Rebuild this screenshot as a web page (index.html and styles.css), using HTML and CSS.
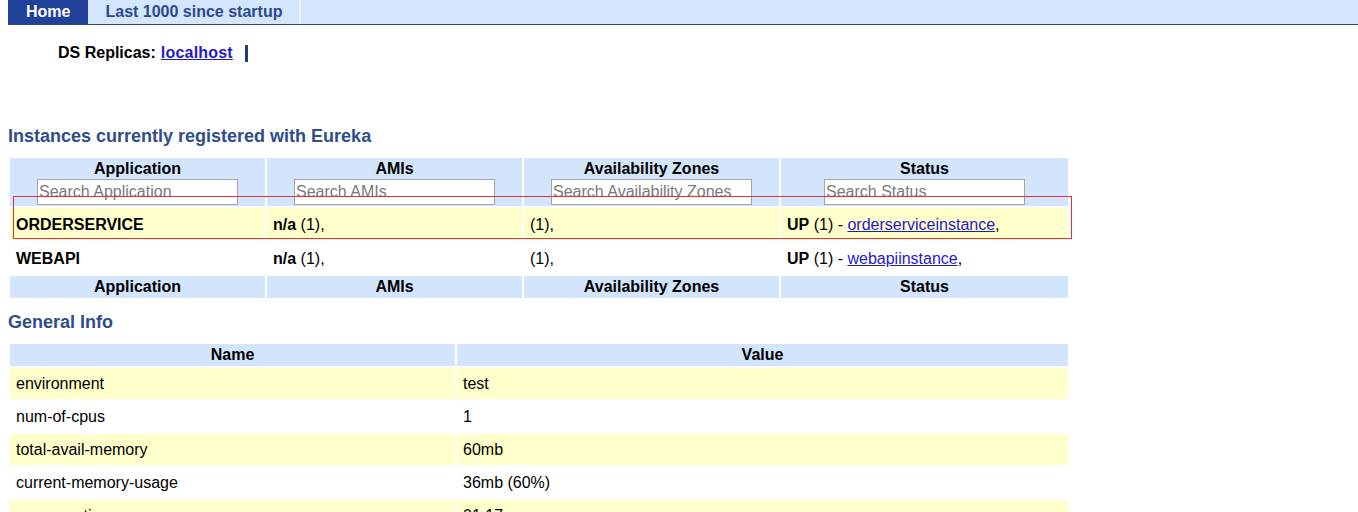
FILE: index.html
```html
<!DOCTYPE html>
<html lang="en">
<head>
<meta charset="utf-8">
<title>Eureka</title>
<link rel="stylesheet" href="styles.css">
</head>
<body>
<nav class="nav">
  <a class="tab tab-active" href="#">Home</a>
  <a class="tab" href="#">Last 1000 since startup</a>
</nav>

<div class="replicas">
  <span class="replicas-label">DS Replicas:</span>
  <a class="link" href="#">localhost</a>
  <span class="pipe"></span>
</div>

<h2 class="section-title">Instances currently registered with Eureka</h2>
<table class="grid instances">
  <colgroup>
    <col class="c-app"><col class="c-ami"><col class="c-az"><col class="c-status">
  </colgroup>
  <thead>
    <tr>
      <th class="th-search"><div class="th-label">Application</div><input class="search" placeholder="Search Application"></th>
      <th class="th-search"><div class="th-label">AMIs</div><input class="search" placeholder="Search AMIs"></th>
      <th class="th-search"><div class="th-label">Availability Zones</div><input class="search" placeholder="Search Availability Zones"></th>
      <th class="th-search"><div class="th-label">Status</div><input class="search" placeholder="Search Status"></th>
    </tr>
  </thead>
  <tbody>
    <tr class="odd">
      <td><b>ORDERSERVICE</b></td>
      <td><b>n/a</b> (1),</td>
      <td>(1),</td>
      <td><b>UP</b> (1) - <a class="link" href="#">orderserviceinstance</a>,</td>
    </tr>
    <tr class="even">
      <td><b>WEBAPI</b></td>
      <td><b>n/a</b> (1),</td>
      <td>(1),</td>
      <td><b>UP</b> (1) - <a class="link" href="#">webapiinstance</a>,</td>
    </tr>
  </tbody>
  <tfoot>
    <tr>
      <th>Application</th>
      <th>AMIs</th>
      <th>Availability Zones</th>
      <th>Status</th>
    </tr>
  </tfoot>
</table>

<h2 class="section-title">General Info</h2>
<table class="grid info">
  <colgroup>
    <col class="c-name"><col class="c-value">
  </colgroup>
  <thead>
    <tr><th>Name</th><th>Value</th></tr>
  </thead>
  <tbody>
    <tr class="odd"><td>environment</td><td>test</td></tr>
    <tr class="even"><td>num-of-cpus</td><td>1</td></tr>
    <tr class="odd"><td>total-avail-memory</td><td>60mb</td></tr>
    <tr class="even"><td>current-memory-usage</td><td>36mb (60%)</td></tr>
    <tr class="odd"><td>server-uptime</td><td>01:17</td></tr>
  </tbody>
</table>

<div class="highlight"></div>
</body>
</html>
```

FILE: styles.css
```css
html, body {
  background: #ffffff;
}

body {
  margin: 0 0 0 8px;
  font-family: "Liberation Sans", Arial, sans-serif;
  font-size: 16px;
  color: #000;
  position: relative;
}

.nav {
  display: flex;
  height: 24px;
  background: #d4e6fd;
  border-bottom: 1px solid #34495e;
}

.tab {
  display: block;
  padding: 0 17px;
  line-height: 24px;
  font-weight: bold;
  font-size: 16px;
  color: #2b4a8c;
  text-decoration: none;
  border-right: 2px solid #eaf3ff;
}

.tab-active {
  background: #21409a;
  color: #ffffff;
  border-right: 1px solid #21409a;
  padding: 0 17px 0 18px;
}

.replicas {
  display: flex;
  align-items: center;
  margin: 19px 0 64px 50px;
  line-height: 18px;
  font-weight: bold;
}

.replicas-label {
  margin-right: 5px;
}

.link {
  color: #1f1acb;
  text-decoration: underline;
}

.replicas .link {
  letter-spacing: 0.2px;
}

.pipe {
  display: inline-block;
  width: 3px;
  height: 17px;
  background: #233d7a;
  margin-left: 12px;
}

.section-title {
  margin: 12px 0 9px 0;
  font-size: 18px;
  line-height: 21px;
  font-weight: bold;
  color: #2e4d8c;
}

.grid {
  border-collapse: separate;
  border-spacing: 2px;
  table-layout: fixed;
  width: 1062px;
}

.grid th {
  background: #d3e5fc;
  font-weight: bold;
  text-align: center;
  line-height: 18px;
  padding: 2px 6px;
}

.grid td {
  text-align: left;
  vertical-align: middle;
  padding: 8px 6px 6px 6px;
  line-height: 18px;
}

.info td {
  padding: 7px 6px 6px 6px;
}

.grid tr.odd td {
  background: #ffffcc;
}

.grid tr.even td {
  background: #ffffff;
}

.c-app, .c-ami, .c-az { width: 255px; }
.c-status { width: 287px; }
.c-name { width: 445px; }
.c-value { width: 611px; }

.grid th.th-search {
  padding: 2px 6px 1px 6px;
}

.th-label {
  line-height: 18px;
}

.search {
  display: block;
  box-sizing: border-box;
  width: 201px;
  height: 26px;
  margin: 1px auto 0 auto;
  padding: 0 1px;
  border: 1px solid #a5a5a5;
  background: #ffffff;
  font-family: "Liberation Sans", Arial, sans-serif;
  font-size: 16px;
  color: #333;
}

.search::placeholder {
  color: #7a7a7a;
}

.highlight {
  position: absolute;
  left: 5px;
  top: 196px;
  width: 1059px;
  height: 43px;
  box-sizing: border-box;
  border: 1px solid #e0313d;
  pointer-events: none;
}
```
